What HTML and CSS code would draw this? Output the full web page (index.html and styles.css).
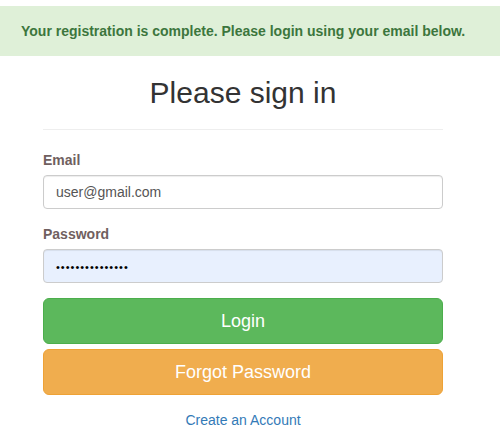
FILE: index.html
```html
<!DOCTYPE html>
<html>
<head>
<meta charset="utf-8">
<link rel="stylesheet" href="styles.css">
</head>
<body>
<div class="page">
  <div class="alert">Your registration is complete. Please login using your email below.</div>
  <div class="container">
    <h2 class="title">Please sign in</h2>
    <hr class="rule">
    <form class="form">
      <div class="group">
        <label class="label">Email</label>
        <div class="input">user@gmail.com</div>
      </div>
      <div class="group">
        <label class="label">Password</label>
        <div class="input input-autofill"><span class="dots">•••••••••••••••</span></div>
      </div>
      <div class="btn btn-success">Login</div>
      <div class="btn btn-warning">Forgot Password</div>
      <a class="link" href="#">Create an Account</a>
    </form>
  </div>
</div>
</body>
</html>
```

FILE: styles.css
```css
* { box-sizing: border-box; }
html, body {
  margin: 0;
  padding: 0;
  background: #fff;
  font-family: "Liberation Sans", Arial, sans-serif;
  font-size: 14px;
  line-height: 20px;
  color: #333;
}
.page {
  padding-top: 6px;
}
.alert {
  background: #dff0d8;
  color: #3c763d;
  font-weight: bold;
  font-size: 14px;
  line-height: 20px;
  padding: 15px 15px 15px 21px;
  white-space: nowrap;
}
.container {
  width: 400px;
  margin: 0 0 0 43px;
}
.title {
  margin: 20px 0 0;
  font-size: 30px;
  font-weight: normal;
  line-height: 33px;
  text-align: center;
  color: #333;
}
.rule {
  margin: 20px 0 20px;
  border: 0;
  border-top: 1px solid #eee;
  height: 0;
}
.form {
  display: flex;
  flex-direction: column;
}
.group {
  display: flex;
  flex-direction: column;
  margin-bottom: 15px;
}
.label {
  font-weight: bold;
  color: #705f5f;
  margin-bottom: 5px;
  line-height: 20px;
}
.input {
  height: 34px;
  padding: 6px 12px;
  border: 1px solid #ccc;
  border-radius: 4px;
  color: #555;
  font-size: 14px;
  line-height: 20px;
  box-shadow: inset 0 1px 1px rgba(0,0,0,.075);
}
.input-autofill {
  background: #e8f0fe;
  color: #000;
}
.dots {
  font-size: 11px;
  letter-spacing: 1px;
  color: #000;
}
.btn {
  height: 46px;
  border-radius: 6px;
  color: #fff;
  font-size: 18px;
  line-height: 44px;
  text-align: center;
  border: 1px solid transparent;
}
.btn-success {
  background: #5cb85c;
  border-color: #4cae4c;
}
.btn-warning {
  background: #f0ad4e;
  border-color: #eea236;
  margin-top: 5px;
}
.link {
  margin-top: 15px;
  align-self: center;
  color: #337ab7;
  text-decoration: none;
  font-size: 14px;
  line-height: 20px;
}
```
